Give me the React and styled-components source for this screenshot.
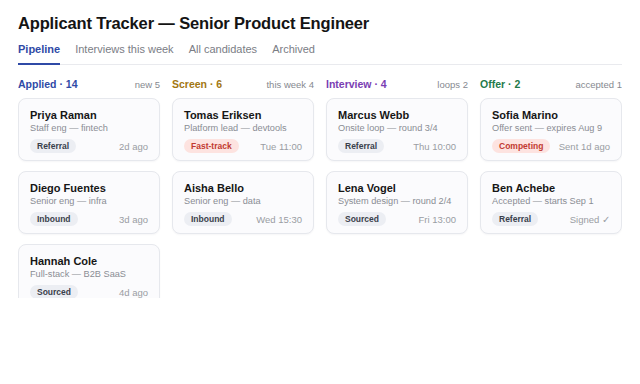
import React from 'react';
import styled, { createGlobalStyle } from 'styled-components';

const GlobalStyle = createGlobalStyle`
  html, body {
    margin: 0;
    padding: 0;
    background: #ffffff;
  }
  body {
    font-family: "Liberation Sans", Arial, sans-serif;
    color: #151515;
  }
`;

const Page = styled.div`
  width: 640px;
  height: 384px;
  box-sizing: border-box;
  padding: 13px 18px 0;
  overflow: hidden;
`;

const Title = styled.h1`
  margin: 0;
  font-size: 16.5px;
  font-weight: 700;
  line-height: 20px;
  color: #141414;
  letter-spacing: -0.15px;
`;

const Tabs = styled.nav`
  display: flex;
  gap: 15px;
  margin-top: 8px;
  border-bottom: 1px solid #e9eaee;
`;

const Tab = styled.div`
  font-size: 11px;
  line-height: 14px;
  padding: 1px 0 7px;
  font-weight: ${(p) => (p.$active ? 700 : 400)};
  color: ${(p) => (p.$active ? '#2f4aa6' : '#7a7d85')};
  border-bottom: 2px solid ${(p) => (p.$active ? '#2f4aa6' : 'transparent')};
  margin-bottom: -1px;
`;

const Board = styled.div`
  display: grid;
  grid-template-columns: repeat(4, 1fr);
  gap: 12px;
  margin-top: 13px;
  height: 220px;
  overflow: hidden;
`;

const Column = styled.section`
  display: flex;
  flex-direction: column;
  min-width: 0;
`;

const ColHead = styled.div`
  display: flex;
  justify-content: space-between;
  align-items: baseline;
  height: 16px;
  margin-bottom: 4px;
`;

const ColTitle = styled.span`
  font-size: 10.5px;
  font-weight: 700;
  color: ${(p) => p.$color};
`;

const ColMeta = styled.span`
  font-size: 9.5px;
  color: #868990;
`;

const Cards = styled.div`
  display: flex;
  flex-direction: column;
  gap: 10px;
`;

const Card = styled.article`
  box-sizing: border-box;
  height: 63px;
  padding: 9px 11px 0;
  background: #fbfbfd;
  border: 1px solid #e6e8ed;
  border-radius: 8px;
  box-shadow: 0 1px 2px rgba(20, 25, 40, 0.04);
`;

const Name = styled.div`
  font-size: 11px;
  font-weight: 700;
  line-height: 14px;
  color: #161616;
`;

const Role = styled.div`
  font-size: 9.2px;
  line-height: 12px;
  color: #8a8d94;
  white-space: nowrap;
`;

const Footer = styled.div`
  display: flex;
  justify-content: space-between;
  align-items: center;
  margin-top: 5px;
`;

const Badge = styled.span`
  font-size: 8.5px;
  font-weight: 700;
  line-height: 14px;
  padding: 0 7px;
  border-radius: 7px;
  background: ${(p) => (p.$hot ? '#fde3e0' : '#eceef3')};
  color: ${(p) => (p.$hot ? '#c23a30' : '#3a3f4b')};
`;

const When = styled.span`
  font-size: 9.5px;
  color: #9a9da3;
`;

const columns = [
  {
    title: 'Applied · 14',
    meta: 'new 5',
    color: '#2f4aa6',
    cards: [
      { name: 'Priya Raman', role: 'Staff eng — fintech', tag: 'Referral', when: '2d ago' },
      { name: 'Diego Fuentes', role: 'Senior eng — infra', tag: 'Inbound', when: '3d ago' },
      { name: 'Hannah Cole', role: 'Full-stack — B2B SaaS', tag: 'Sourced', when: '4d ago' },
    ],
  },
  {
    title: 'Screen · 6',
    meta: 'this week 4',
    color: '#a27712',
    cards: [
      { name: 'Tomas Eriksen', role: 'Platform lead — devtools', tag: 'Fast-track', hot: true, when: 'Tue 11:00' },
      { name: 'Aisha Bello', role: 'Senior eng — data', tag: 'Inbound', when: 'Wed 15:30' },
    ],
  },
  {
    title: 'Interview · 4',
    meta: 'loops 2',
    color: '#7a3db3',
    cards: [
      { name: 'Marcus Webb', role: 'Onsite loop — round 3/4', tag: 'Referral', when: 'Thu 10:00' },
      { name: 'Lena Vogel', role: 'System design — round 2/4', tag: 'Sourced', when: 'Fri 13:00' },
    ],
  },
  {
    title: 'Offer · 2',
    meta: 'accepted 1',
    color: '#1f7a4a',
    cards: [
      { name: 'Sofia Marino', role: 'Offer sent — expires Aug 9', tag: 'Competing', hot: true, when: 'Sent 1d ago' },
      { name: 'Ben Achebe', role: 'Accepted — starts Sep 1', tag: 'Referral', when: 'Signed ✓' },
    ],
  },
];

const tabs = ['Pipeline', 'Interviews this week', 'All candidates', 'Archived'];

export default function App() {
  return (
    <Page>
      <GlobalStyle />
      <Title>Applicant Tracker — Senior Product Engineer</Title>
      <Tabs>
        {tabs.map((t, i) => (
          <Tab key={t} $active={i === 0}>{t}</Tab>
        ))}
      </Tabs>
      <Board>
        {columns.map((col) => (
          <Column key={col.title}>
            <ColHead>
              <ColTitle $color={col.color}>{col.title}</ColTitle>
              <ColMeta>{col.meta}</ColMeta>
            </ColHead>
            <Cards>
              {col.cards.map((c) => (
                <Card key={c.name}>
                  <Name>{c.name}</Name>
                  <Role>{c.role}</Role>
                  <Footer>
                    <Badge $hot={c.hot}>{c.tag}</Badge>
                    <When>{c.when}</When>
                  </Footer>
                </Card>
              ))}
            </Cards>
          </Column>
        ))}
      </Board>
    </Page>
  );
}
